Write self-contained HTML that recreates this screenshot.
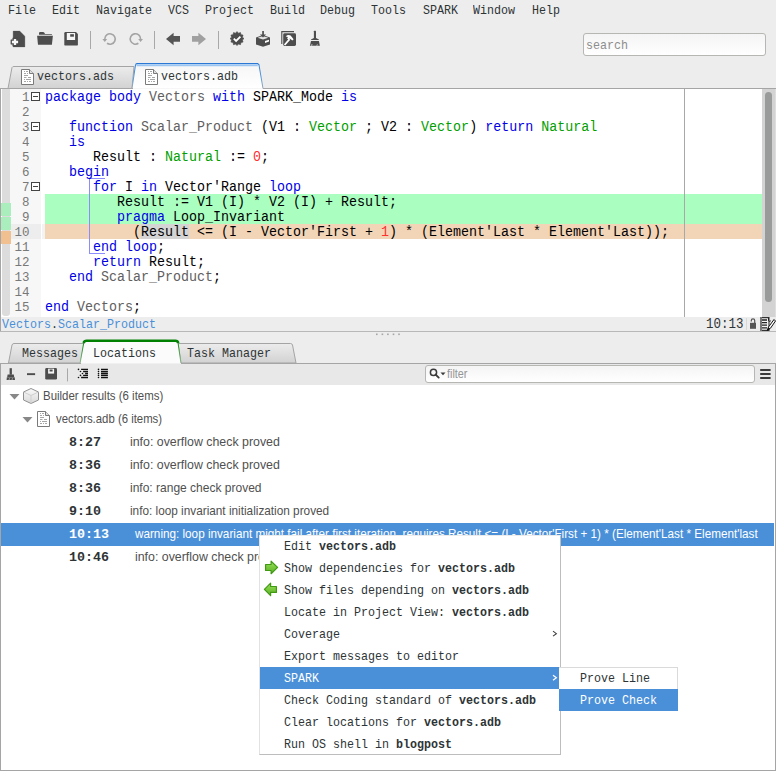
<!DOCTYPE html><html><head><meta charset='utf-8'><style>
*{margin:0;padding:0;box-sizing:border-box}
html,body{width:776px;height:771px;overflow:hidden;background:#ededed;font-family:"Liberation Mono", monospace;}
.a{position:absolute;white-space:pre}
.ui{font-size:13px;transform:scaleX(0.8974);transform-origin:0 0}
.menu{font-size:13px;color:#2e3436;line-height:16px;top:3px;transform:scaleX(0.8974);transform-origin:0 0}
.code{font-size:14px;line-height:15px;color:#000;transform:scaleX(0.95238);transform-origin:0 0}
.kw{color:#0000e6} .ty{color:#00a000} .nm{color:#606060} .num{color:#ff3030}
.ln{font-size:12.5px;line-height:15px;color:#787878;text-align:right;width:29.5px;left:0}
.tree{font-family:"Liberation Sans", sans-serif;font-size:12.4px;color:#505050;line-height:23px}
.time{font-family:"Liberation Mono", monospace;font-weight:bold;font-size:13.33px;color:#2e3436;line-height:23px}
.cm{font-size:13px;color:#2e3436;line-height:22px;transform:scaleX(0.8974);transform-origin:0 0}
.cm b{font-weight:bold}
</style></head><body>
<div class='a menu' style='left:7.8px'>File</div>
<div class='a menu' style='left:51.9px'>Edit</div>
<div class='a menu' style='left:95.7px'>Navigate</div>
<div class='a menu' style='left:168.2px'>VCS</div>
<div class='a menu' style='left:204.5px'>Project</div>
<div class='a menu' style='left:270.1px'>Build</div>
<div class='a menu' style='left:320.4px'>Debug</div>
<div class='a menu' style='left:371.2px'>Tools</div>
<div class='a menu' style='left:423.1px'>SPARK</div>
<div class='a menu' style='left:473.0px'>Window</div>
<div class='a menu' style='left:531.8px'>Help</div>

<svg class='a' style='left:0;top:0' width='340' height='60' viewBox='0 0 340 60'>
 <!-- new file -->
 <path d='M13.1 31.1 H19.7 L24.9 36.2 V46.9 H13.1 Z' fill='#4d4d4d' stroke='#4d4d4d' stroke-width='0.3' stroke-linejoin='round'/>
 <path d='M12.8 37.9 H17.2 V39.8 H19.1 V44.2 H17.2 V46.1 H12.8 V44.2 H10.9 V39.8 H12.8 Z' fill='#4d4d4d' stroke='#4d4d4d' stroke-width='0.5' stroke-linejoin='round'/>
 <path d='M13.85 38.9 H16.15 V40.85 H18.1 V43.15 H16.15 V45.1 H13.85 V43.15 H11.9 V40.85 H13.85 Z' fill='#f8f8f8'/>
 <!-- open folder -->
 <path d='M39 34.8 V33 Q39 32 40.2 32 H43 Q43.8 32 44.4 32.8 L45 33.9 H51.9 V34.8 Z' fill='#4d4d4d'/>
 <path d='M37.1 35.8 H52.9 L51.9 44.7 H38 Z' fill='#4d4d4d'/>
 <!-- save -->
 <path d='M65.5 32 H76 L77.9 33.9 V44.4 Q77.9 45.6 76.7 45.6 H65.5 Q64.3 45.6 64.3 44.4 V33.2 Q64.3 32 65.5 32 Z' fill='#4d4d4d'/>
 <rect x='66.8' y='33' width='8.3' height='7' fill='#f6f6f6'/>
 <rect x='70.2' y='34.2' width='3.7' height='2.5' fill='#4d4d4d'/>
 <!-- sep -->
 <rect x='154' y='31' width='1' height='18' fill='#a8a8a8'/>
 <rect x='90' y='31' width='1' height='18' fill='#a8a8a8'/>
 <!-- undo -->
 <path d='M104.8 39 A5.2 5.2 0 1 1 107.0 43.26' fill='none' stroke='#a4a4a4' stroke-width='1.6'/>
 <path d='M102.4 38.9 H107.2 L104.8 41.9 Z' fill='#a4a4a4'/>
 <!-- redo -->
 <path d='M140.6 39 A5.2 5.2 0 1 0 138.38 43.26' fill='none' stroke='#a4a4a4' stroke-width='1.6'/>
 <path d='M138.2 38.9 H143 L140.6 41.9 Z' fill='#a4a4a4'/>
 <!-- back -->
 <path d='M166 39 L173.6 32.8 V36.1 H180 V41.7 H173.6 V45.2 Z' fill='#555'/>
 <!-- fwd -->
 <path d='M206 39 L198.4 32.8 V36.1 H192 V41.7 H198.4 V45.2 Z' fill='#a0a0a0'/>
 <!-- sep -->
 <rect x='218' y='31' width='1' height='18' fill='#a8a8a8'/>
 <!-- check badge -->
 <path d='M237.00 31.60 L238.45 33.19 L240.50 32.54 L240.96 34.64 L243.06 35.10 L242.41 37.15 L244.00 38.60 L242.41 40.05 L243.06 42.10 L240.96 42.56 L240.50 44.66 L238.45 44.01 L237.00 45.60 L235.55 44.01 L233.50 44.66 L233.04 42.56 L230.94 42.10 L231.59 40.05 L230.00 38.60 L231.59 37.15 L230.94 35.10 L233.04 34.64 L233.50 32.54 L235.55 33.19 Z' fill='#4d4d4d' stroke='#4d4d4d' stroke-width='0.6' stroke-linejoin='round'/>
 <path d='M233.8 38.7 L236.1 41 L240.4 36.6' fill='none' stroke='#fff' stroke-width='1.8'/>
 <!-- download box -->
 <path d='M256 37.6 L263 35 L270 37.6 V44.6 L263 46.8 L256 44.6 Z' fill='#4d4d4d'/>
 <path d='M257.6 37.7 L263 35.9 L268.4 37.7 L263 39.6 Z' fill='#e2e2e2'/>
 <rect x='262.2' y='31' width='1.7' height='4' fill='#4d4d4d'/>
 <path d='M259.9 34.6 H266.1 L263 37.6 Z' fill='#4d4d4d'/>
 <path d='M265 41.1 L269 39.8 V41.6 L265 42.9 Z' fill='#fff'/>
 <!-- hammer box -->
 <path d='M281.8 44 V31.6 H294' fill='none' stroke='#4d4d4d' stroke-width='1.1'/>
 <rect x='283.2' y='33.3' width='12.8' height='12.6' rx='1.4' fill='#4d4d4d'/>
 <path d='M284.6 45 L289.6 39.2' stroke='#fff' stroke-width='1.8'/>
 <path d='M285.6 36.4 Q288 34.3 290.6 35.6 L293.6 39.3 L292.4 40.4 L289.8 38.6 L288.6 39.8 L287 38.3 L288 37.2 Q287 36.3 285.6 36.4 Z' fill='#fff'/>
 <!-- broom -->
 <rect x='313.9' y='30.8' width='2.1' height='7.6' rx='0.5' fill='#4d4d4d'/>
 <path d='M313.9 38 H316 L318.9 39.4 V39.9 H311 V39.4 Z' fill='#4d4d4d'/>
 <path d='M311 41.1 H318.9 L319.9 45.8 H309.9 Z' fill='#4d4d4d'/>
 <path d='M311.6 45.8 L312 44 M316.8 45.8 L317.4 44.3' stroke='#ededed' stroke-width='0.7'/>
</svg>

<div class='a' style='left:583px;top:33px;width:183px;height:23px;border:1px solid #b6b6b3;border-radius:3px;background:linear-gradient(#f4f4f4,#fff)'></div>
<div class='a ui' style='left:586px;top:38px;line-height:16px;color:#8d8d8d'>search</div>
<svg class='a' style='left:0;top:60px' width='280' height='30'><defs><linearGradient id='tg' x1='0' y1='0' x2='0' y2='1'><stop offset='0' stop-color='#ececec'/><stop offset='1' stop-color='#d2d2d2'/></linearGradient><linearGradient id='ta' x1='0' y1='0' x2='0' y2='1'><stop offset='0' stop-color='#f6f6f6'/><stop offset='1' stop-color='#ffffff'/></linearGradient><linearGradient id='tb' x1='0' y1='0' x2='0' y2='1'><stop offset='0' stop-color='#2f7fd6'/><stop offset='0.6' stop-color='#5a9ad8'/><stop offset='1' stop-color='#9aa8b4'/></linearGradient></defs><path d='M8 28.5 L12 7.5 Q12.5 6.5 14 6.5 L134 6.5 L132 28.5 Z' fill='url(#tg)' stroke='#a4a4a4'/><path d='M132 28.5 L135.5 5 Q136 3.5 138 3.5 L257 3.5 Q258.5 3.5 259 5 L263 28.5' fill='url(#ta)' stroke='url(#tb)'/><path d='M136.5 5.2 H257.8' stroke='#9cc6f2' stroke-width='2'/><path d='M135.5 4 Q136 3.5 138 3.5 L257 3.5 Q258.5 3.5 259 4.5' fill='none' stroke='#2a78d4' stroke-width='1'/></svg>
<svg class='a' style='left:21px;top:69px' width='14' height='17' viewBox='0 0 14 17'><path d='M0.5 0.5 H8.5 L12.5 4.5 V15.5 H0.5 Z' fill='#fff' stroke='#7a7a7a'/><path d='M8.5 0.5 V4.5 H12.5' fill='#e0e0e0' stroke='#7a7a7a'/><path d='M3 2.5h1M5 2.5h2M3 4.5h2M6 4.5h1M3 6.5h4M3 8.5h2.5M7 8.5h3M3 10.5h1M5 10.5h5M3 12.5h2M6 12.5h1M8 12.5h2' stroke='#a6a6a6' stroke-width='1'/></svg>
<div class='a ui' style='left:37px;top:69px;line-height:16px;color:#2e3436'>vectors.ads</div>
<svg class='a' style='left:145px;top:69px' width='14' height='17' viewBox='0 0 14 17'><path d='M0.5 0.5 H8.5 L12.5 4.5 V15.5 H0.5 Z' fill='#fff' stroke='#7a7a7a'/><path d='M8.5 0.5 V4.5 H12.5' fill='#e0e0e0' stroke='#7a7a7a'/><path d='M3 2.5h1M5 2.5h2M3 4.5h2M6 4.5h1M3 6.5h4M3 8.5h2.5M7 8.5h3M3 10.5h1M5 10.5h5M3 12.5h2M6 12.5h1M8 12.5h2' stroke='#a6a6a6' stroke-width='1'/></svg>
<div class='a ui' style='left:161px;top:69px;line-height:16px;color:#2e3436'>vectors.adb</div>
<div class='a' style='left:0;top:89px;width:776px;height:228px;background:#fff;border-left:1px solid #a5a5a5'></div>
<div class='a' style='left:0;top:88px;width:133px;height:1px;background:#a5a5a5'></div>
<div class='a' style='left:263px;top:88px;width:513px;height:1px;background:#a5a5a5'></div>
<div class='a' style='left:2px;top:89px;width:8px;height:227px;background:#dcdcdc;border-radius:0 0 3px 3px'></div>
<div class='a' style='left:0;top:88px;width:1px;height:243px;background:#a5a5a5'></div>
<div class='a' style='left:10px;top:89px;width:31px;height:228px;background:#f7f7f7'></div>
<div class='a' style='left:11px;top:224px;width:30px;height:15px;background:#ededed'></div>
<div class='a' style='left:42px;top:224px;width:3px;height:15px;background:#f3f3f3'></div>
<div class='a' style='left:1px;top:203px;width:10px;height:13px;background:#a9eebc'></div>
<div class='a' style='left:1px;top:217px;width:10px;height:13px;background:#a9eebc'></div>
<div class='a' style='left:1px;top:231px;width:10px;height:13px;background:#f0c090'></div>
<div class='a' style='left:45px;top:194px;width:717px;height:30px;background:#aaffc0'></div>
<div class='a' style='left:45px;top:224px;width:717px;height:15px;background:#f2d4b6'></div>
<div class='a' style='left:140.5px;top:224px;width:48px;height:15px;background:#d4d4d4'></div>
<div class='a' style='left:684px;top:89px;width:1px;height:228px;background:#a8a8a8'></div>
<div class='a' style='left:762px;top:89px;width:13px;height:228px;background:#d3d3d3'></div>
<div class='a' style='left:765px;top:92px;width:7px;height:210px;background:#999a9a;border-radius:4px'></div>
<div class='a' style='left:775px;top:89px;width:1px;height:228px;background:#dedede'></div>
<div class='a' style='left:89px;top:178px;width:16px;height:76px;border:1px solid #8c8cff;border-right:none'></div>
<div class='a ln' style='top:91px'>1</div>
<div class='a ln' style='top:106px'>2</div>
<div class='a ln' style='top:121px'>3</div>
<div class='a ln' style='top:136px'>4</div>
<div class='a ln' style='top:151px'>5</div>
<div class='a ln' style='top:166px'>6</div>
<div class='a ln' style='top:181px'>7</div>
<div class='a ln' style='top:196px'>8</div>
<div class='a ln' style='top:211px'>9</div>
<div class='a ln' style='top:226px'>10</div>
<div class='a ln' style='top:241px'>11</div>
<div class='a ln' style='top:256px'>12</div>
<div class='a ln' style='top:271px'>13</div>
<div class='a ln' style='top:286px'>14</div>
<div class='a ln' style='top:301px'>15</div>
<svg class='a' style='left:31px;top:92px' width='9' height='9'><rect x='0.5' y='0.5' width='8' height='8' fill='#fff' stroke='#444'/><rect x='2' y='4' width='5' height='1' fill='#444'/></svg>
<svg class='a' style='left:31px;top:122px' width='9' height='9'><rect x='0.5' y='0.5' width='8' height='8' fill='#fff' stroke='#444'/><rect x='2' y='4' width='5' height='1' fill='#444'/></svg>
<svg class='a' style='left:31px;top:182px' width='9' height='9'><rect x='0.5' y='0.5' width='8' height='8' fill='#fff' stroke='#444'/><rect x='2' y='4' width='5' height='1' fill='#444'/></svg>
<div class='a code' style='left:44.5px;top:90px'><span class='kw'>package body</span> <span class='nm'>Vectors</span> <span class='kw'>with</span> SPARK_Mode <span class='kw'>is</span></div>
<div class='a code' style='left:44.5px;top:105px'></div>
<div class='a code' style='left:44.5px;top:120px'>   <span class='kw'>function</span> <span class='nm'>Scalar_Product</span> (V1 : <span class='ty'>Vector</span> ; V2 : <span class='ty'>Vector</span>) <span class='kw'>return</span> <span class='ty'>Natural</span></div>
<div class='a code' style='left:44.5px;top:135px'>   <span class='kw'>is</span></div>
<div class='a code' style='left:44.5px;top:150px'>      Result : <span class='ty'>Natural</span> := <span class='num'>0</span>;</div>
<div class='a code' style='left:44.5px;top:165px'>   <span class='kw'>begin</span></div>
<div class='a code' style='left:44.5px;top:180px'>      <span class='kw'>for</span> I <span class='kw'>in</span> Vector'Range <span class='kw'>loop</span></div>
<div class='a code' style='left:44.5px;top:195px'>         Result := V1 (I) * V2 (I) + Result;</div>
<div class='a code' style='left:44.5px;top:210px'>         <span class='kw'>pragma</span> Loop_Invariant</div>
<div class='a code' style='left:44.5px;top:225px'>           (Result &lt;= (I - Vector'First + <span class='num'>1</span>) * (Element'Last * Element'Last));</div>
<div class='a code' style='left:44.5px;top:240px'>      <span class='kw'>end loop</span>;</div>
<div class='a code' style='left:44.5px;top:255px'>      <span class='kw'>return</span> Result;</div>
<div class='a code' style='left:44.5px;top:270px'>   <span class='kw'>end</span> <span class='nm'>Scalar_Product</span>;</div>
<div class='a code' style='left:44.5px;top:285px'></div>
<div class='a code' style='left:44.5px;top:300px'><span class='kw'>end</span> <span class='nm'>Vectors</span>;</div>
<div class='a ui' style='left:2px;top:318px;line-height:14px;color:#4a90d9'>Vectors<span style='color:#2e3436'>.</span>Scalar_Product</div>
<div class='a' style='left:706px;top:317px;font-size:14px;line-height:14px;color:#2e3436;transform:scaleX(0.89);transform-origin:0 0'>10:13</div>
<div class='a' style='left:746px;top:318px;width:1px;height:12px;background:#d8d8d8'></div>
<svg class='a' style='left:749px;top:317px' width='27' height='15'><path d='M2.3 4.5 V3.6 A1.7 1.7 0 0 1 5.7 3.6 V6' fill='none' stroke='#555' stroke-width='1.2'/><rect x='1' y='5.8' width='6' height='6' fill='#555'/><path d='M11.6 0.6 H20 V13.4 H11.6 Z' fill='#f4f4f4' stroke='#333' stroke-width='1.1'/><rect x='11' y='0' width='2' height='14' fill='#777'/><path d='M13 3h5M13 5.6h5M13 8.2h5M13 10.8h5' stroke='#222' stroke-width='1.3'/><path d='M25 2.5 L19.5 10 L18.2 13.5 L21.5 11.2 L26.5 4 Z' fill='#fff' stroke='#111' stroke-width='1'/><path d='M18.2 13.5 L19.3 10.4 L21.3 11.6 Z' fill='#111'/><path d='M19.5 0.8 v3 q1 1.2 2.4 0' fill='none' stroke='#222' stroke-width='1'/></svg>
<div class='a' style='left:0;top:331px;width:776px;height:1px;background:#b8b8b8'></div>
<svg class='a' style='left:376px;top:333px' width='26' height='3'><g fill='#a6a6a6'><rect x='0' y='0.5' width='1.6' height='1.6'/><rect x='5.6' y='0.5' width='1.6' height='1.6'/><rect x='11.1' y='0.5' width='1.6' height='1.6'/><rect x='16.7' y='0.5' width='1.6' height='1.6'/><rect x='22.2' y='0.5' width='1.6' height='1.6'/></g></svg>
<svg class='a' style='left:0;top:336px' width='320' height='30'><defs><linearGradient id='tg2' x1='0' y1='0' x2='0' y2='1'><stop offset='0' stop-color='#ececec'/><stop offset='1' stop-color='#d2d2d2'/></linearGradient><linearGradient id='gl' x1='0' y1='0' x2='0' y2='1'><stop offset='0' stop-color='#108a10'/><stop offset='1' stop-color='#90b890'/></linearGradient></defs><path d='M8.5 27 L12 9 Q12.5 7.5 14 7.5 L84 7.5 L80.5 27 Z' fill='url(#tg2)' stroke='#a4a4a4'/><path d='M178 7.5 L290.5 7.5 Q292 7.5 292.5 9 L296 27 L181 27 Z' fill='url(#tg2)' stroke='#a4a4a4'/><path d='M80 28 L83.8 6.5 Q84.5 4.5 86.5 4.5 L175.5 4.5 Q177.5 4.5 178 6.5 L181 28 Z' fill='#fbfbfb'/><path d='M80 27.5 L83.8 6.5 M178 6.5 L181 27.5' fill='none' stroke='url(#gl)' stroke-width='1'/><path d='M83.6 7 Q84.3 4.7 86.5 4.7 L175.5 4.7 Q177.7 4.7 178.2 7' fill='none' stroke='#008000' stroke-width='2.6'/></svg>
<div class='a ui' style='left:21.5px;top:346px;line-height:16px;color:#2e3436'>Messages</div>
<div class='a ui' style='left:92.5px;top:346px;line-height:16px;color:#2e3436'>Locations</div>
<div class='a ui' style='left:186.5px;top:346px;line-height:16px;color:#2e3436'>Task Manager</div>
<div class='a' style='left:0;top:363px;width:776px;height:408px;background:#fff;border:1px solid #a5a5a5;border-bottom:none'></div>
<div class='a' style='left:1px;top:364px;width:774px;height:21px;background:#e8e8e8'></div>
<div class='a' style='left:81px;top:363px;width:100px;height:1px;background:#f0f0f0'></div>
<div class='a' style='left:0;top:770px;width:776px;height:1px;background:#a5a5a5'></div>
<svg class='a' style='left:0;top:364px' width='120' height='21'><rect x='9.6' y='4.2' width='2.3' height='6.5' fill='#4d4d4d'/><path d='M7.6 10.5 h6.2 l0.4 2.6 h-7 z' fill='#4d4d4d'/><path d='M6.8 13.3 h7.9 l0.3 2.7 h-8.4 z' fill='#4d4d4d'/><path d='M9 15.9 l0.6 -1.6 M12 15.9 l0.5 -1.6' stroke='#e8e8e7' stroke-width='0.6'/><rect x='27' y='9.2' width='8.1' height='1.9' fill='#4d4d4d'/><rect x='45.2' y='4.1' width='11.8' height='11.5' rx='1.3' fill='#4d4d4d'/><rect x='48.1' y='4.7' width='6' height='4.9' fill='#f6f6f6'/><rect x='49.6' y='5.5' width='3' height='2' fill='#4d4d4d'/><rect x='67' y='4.4' width='1' height='13' fill='#a8a8a8'/><g fill='#111'><circle cx='78.5' cy='5.4' r='0.8'/><circle cx='80.5' cy='7.5' r='0.8'/><circle cx='82.5' cy='9.5' r='0.8'/><circle cx='80.5' cy='11.4' r='0.8'/><circle cx='78.5' cy='13.5' r='0.8'/></g><path d='M81.1 5.4h6.9M83.1 7.5h4.9M85.1 9.5h2.9M83.1 11.4h4.9M81.1 13.5h6.9' stroke='#111' stroke-width='1.3'/><g fill='#111'><circle cx='98.5' cy='5.4' r='0.8'/><circle cx='98.5' cy='7.5' r='0.8'/><circle cx='98.5' cy='9.5' r='0.8'/><circle cx='98.5' cy='11.4' r='0.8'/><circle cx='98.5' cy='13.5' r='0.8'/></g><path d='M101 5.4h6.9M101 7.5h6.9M101 9.5h6.9M101 11.4h6.9M101 13.5h6.9' stroke='#111' stroke-width='1.3'/></svg>
<div class='a' style='left:425px;top:365px;width:330px;height:18px;border:1px solid #b6b6b3;border-radius:3px;background:linear-gradient(#f4f4f4,#fff)'></div>
<svg class='a' style='left:428px;top:367px' width='18' height='14'><circle cx='5.5' cy='5.4' r='3.1' fill='none' stroke='#3a3a3a' stroke-width='1.5'/><path d='M7.7 7.6 l3 3' stroke='#3a3a3a' stroke-width='1.9' stroke-linecap='round'/><path d='M12.5 5.4 h5 l-2.5 2.8 z' fill='#3a3a3a'/></svg>
<div class='a' style='left:446.5px;top:366px;font-family:"Liberation Sans", sans-serif;font-size:12px;line-height:16px;color:#959595;transform:scaleX(0.9);transform-origin:0 0'>filter</div>
<svg class='a' style='left:758px;top:366px' width='14' height='16'><path d='M2.9 4h9M2.9 8h9M2.9 12h9' stroke='#3a3a3a' stroke-width='1.9' stroke-linecap='round'/></svg>
<svg class='a' style='left:0;top:385px' width='60' height='46'><path d='M9.5 9 h10 l-5 5.5 z' fill='#888'/><defs><linearGradient id='cg' x1='0' y1='0' x2='0' y2='1'><stop offset='0' stop-color='#fafafa'/><stop offset='1' stop-color='#d8d8d8'/></linearGradient></defs><path d='M31 3.5 l7.5 3.5 v8 l-7.5 3.5 l-7.5 -3.5 v-8 z' fill='url(#cg)' stroke='#909090'/><path d='M23.5 7 l7.5 3.5 l7.5 -3.5 M31 10.5 v8' fill='none' stroke='#cfcfcf'/><path d='M22.5 32 h10 l-5 5.5 z' fill='#888'/></svg>
<svg class='a' style='left:37px;top:411px' width='14' height='17' viewBox='0 0 14 17'><path d='M0.5 0.5 H8.5 L12.5 4.5 V15.5 H0.5 Z' fill='#fff' stroke='#7a7a7a'/><path d='M8.5 0.5 V4.5 H12.5' fill='#e0e0e0' stroke='#7a7a7a'/><path d='M3 2.5h1M5 2.5h2M3 4.5h2M6 4.5h1M3 6.5h4M3 8.5h2.5M7 8.5h3M3 10.5h1M5 10.5h5M3 12.5h2M6 12.5h1M8 12.5h2' stroke='#a6a6a6' stroke-width='1'/></svg>
<div class='a tree' style='left:43px;top:385px;transform:scaleX(0.924);transform-origin:0 0'>Builder results (6 items)</div>
<div class='a tree' style='left:56px;top:408px;transform:scaleX(0.917);transform-origin:0 0'>vectors.adb (6 items)</div>
<div class='a time' style='left:69px;top:431px;'>8:27</div>
<div class='a tree' style='left:130px;top:431px;transform:scaleX(0.998);transform-origin:0 0;'>info: overflow check proved</div>
<div class='a time' style='left:69px;top:454px;'>8:36</div>
<div class='a tree' style='left:130px;top:454px;transform:scaleX(0.998);transform-origin:0 0;'>info: overflow check proved</div>
<div class='a time' style='left:69px;top:477px;'>8:36</div>
<div class='a tree' style='left:130px;top:477px;transform:scaleX(0.969);transform-origin:0 0;'>info: range check proved</div>
<div class='a time' style='left:69px;top:500px;'>9:10</div>
<div class='a tree' style='left:130px;top:500px;transform:scaleX(0.951);transform-origin:0 0;'>info: loop invariant initialization proved</div>
<div class='a' style='left:1px;top:523px;width:773px;height:23px;background:#4a90d9'></div>
<div class='a time' style='left:69px;top:523px;color:#fff'>10:13</div>
<div class='a tree' style='left:135px;top:523px;transform:scaleX(0.945);transform-origin:0 0;color:#fff'>warning: loop invariant might fail after first iteration, requires Result &lt;= (I - Vector'First + 1) * (Element'Last * Element'last</div>
<div class='a time' style='left:69px;top:546px;'>10:46</div>
<div class='a tree' style='left:135px;top:546px;transform:scaleX(0.998);transform-origin:0 0;'>info: overflow check proved</div>
<div class='a' style='left:259px;top:535px;width:302px;height:220px;background:#fff;border:1px solid #bdbdbd;border-top-color:#ebebeb;border-left-color:#e2e2e2'></div>
<div class='a' style='left:260px;top:667px;width:300px;height:22px;background:#4a90d9'></div>
<div class='a cm' style='left:284px;top:536px;'>Edit <b>vectors.adb</b></div>
<div class='a cm' style='left:284px;top:558px;'>Show dependencies for <b>vectors.adb</b></div>
<div class='a cm' style='left:284px;top:580px;'>Show files depending on <b>vectors.adb</b></div>
<div class='a cm' style='left:284px;top:602px;'>Locate in Project View: <b>vectors.adb</b></div>
<div class='a cm' style='left:284px;top:624px;'>Coverage</div>
<div class='a cm' style='left:284px;top:646px;'>Export messages to editor</div>
<div class='a cm' style='left:284px;top:668px;color:#fff'>SPARK</div>
<div class='a cm' style='left:284px;top:690px;'>Check Coding standard of <b>vectors.adb</b></div>
<div class='a cm' style='left:284px;top:712px;'>Clear locations for <b>vectors.adb</b></div>
<div class='a cm' style='left:284px;top:734px;'>Run OS shell in <b>blogpost</b></div>
<svg class='a' style='left:260px;top:556px' width='24' height='44'><defs><linearGradient id='ag' x1='0' y1='0' x2='0' y2='1'><stop offset='0' stop-color='#9ee060'/><stop offset='0.5' stop-color='#78c83c'/><stop offset='1' stop-color='#5cb02a'/></linearGradient></defs><path d='M5.6 8.5 H11.1 V5.2 L17.6 11.4 L11.1 17.7 V14.5 H5.6 Z' fill='url(#ag)' stroke='#3f9a12' stroke-width='1.2' stroke-linejoin='round'/><path d='M4.4 33.4 L10.6 27.2 V30.5 H16.4 V36.4 H10.6 V39.7 Z' fill='url(#ag)' stroke='#3f9a12' stroke-width='1.2' stroke-linejoin='round'/></svg>
<svg class='a' style='left:550px;top:628px' width='10' height='56'><path d='M3 3.2 L6.4 5.7 L3 8.2' fill='none' stroke='#3a3a3a' stroke-width='1.05'/><path d='M3 47.2 L6.4 49.7 L3 52.2' fill='none' stroke='#fff' stroke-width='1.2'/></svg>
<div class='a' style='left:559px;top:667px;width:119px;height:44px;background:#fff;border:1px solid #dadada;border-left:none'></div>
<div class='a' style='left:559px;top:689px;width:119px;height:22px;background:#4a90d9'></div>
<div class='a cm' style='left:580px;top:668px'>Prove Line</div>
<div class='a cm' style='left:580px;top:690px;color:#fff'>Prove Check</div>
</body></html>
